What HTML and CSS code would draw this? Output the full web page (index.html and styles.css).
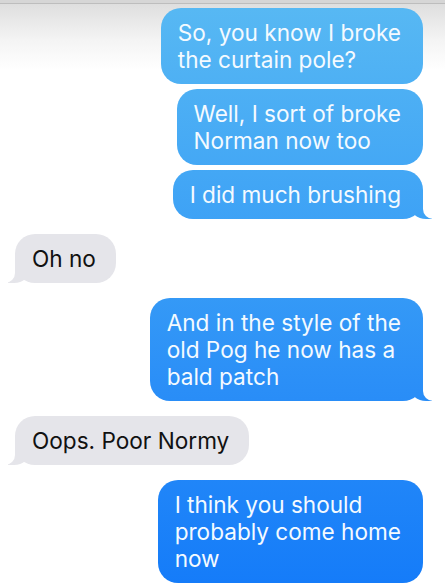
FILE: index.html
```html
<!DOCTYPE html>
<html lang="en">
<head>
  <meta charset="UTF-8" />
  <title>Messages</title>
  <link rel="stylesheet" href="styles.css">
</head>
<body>
  <div class="status-edge"></div>

  <div class="thread">
    <div class="group sent">
      <div class="bubble">So, you know I broke<br>the curtain pole?</div>
      <div class="bubble">Well, I sort of broke<br>Norman now too</div>
      <div class="bubble tail">I did much brushing</div>
    </div>

    <div class="group received">
      <div class="bubble tail">Oh no</div>
    </div>

    <div class="group sent">
      <div class="bubble tail">And in the style of the<br>old Pog he now has a<br>bald patch</div>
    </div>

    <div class="group received">
      <div class="bubble tail">Oops. Poor Normy</div>
    </div>

    <div class="group sent">
      <div class="bubble">I think you should<br>probably come home<br>now</div>
    </div>
  </div>
</body>
</html>
```

FILE: styles.css
```css
body {
  margin: 0;
  font-family: Inter, 'Liberation Sans', sans-serif;
  background: linear-gradient(180deg, #dcdcdc 0px, #f4f4f4 40px, #ffffff 70px);
  min-height: 100vh;
  overflow: hidden;
}
.status-edge {
  height: 3px;
  background: #d6d6d6;
  border-bottom: 1px solid #bdbdbd;
}
.thread {
  display: flex;
  flex-direction: column;
  gap: 15px;
  padding: 4px 22px 0 15px;
}
.group {
  display: flex;
  flex-direction: column;
  gap: 5px;
}
.group.sent {
  align-items: flex-end;
}
.group.received {
  align-items: flex-start;
}
.bubble {
  position: relative;
  z-index: 0;
  font-size: 22.6px;
  line-height: 27px;
  padding: 11px 22px 11px 17px;
  border-radius: 20px;
  white-space: nowrap;
}
.sent .bubble {
  color: #f4faff;
  background: linear-gradient(180deg, #58b9f3 0px, #3a9ff6 250px, #2a8ef7 390px, #157cf9 583px) fixed;
}
.received .bubble {
  color: #111;
  background: #e5e5ea;
  padding-right: 20px;
}
/* tail */
.bubble.tail::before,
.bubble.tail::after {
  content: "";
  position: absolute;
  bottom: 0;
  height: 20px;
  z-index: -1;
}
.sent .bubble.tail::before {
  right: -9px;
  width: 22px;
  background: inherit;
  background-attachment: fixed;
  border-bottom-left-radius: 16px 14px;
}
.sent .bubble.tail::after {
  right: -26px;
  width: 26px;
  background: #fff;
  border-bottom-left-radius: 10px;
}
.received .bubble.tail::before {
  left: -7px;
  width: 22px;
  background: #e5e5ea;
  border-bottom-right-radius: 16px 14px;
}
.received .bubble.tail::after {
  left: -26px;
  width: 26px;
  background: #fff;
  border-bottom-right-radius: 10px;
}
```
